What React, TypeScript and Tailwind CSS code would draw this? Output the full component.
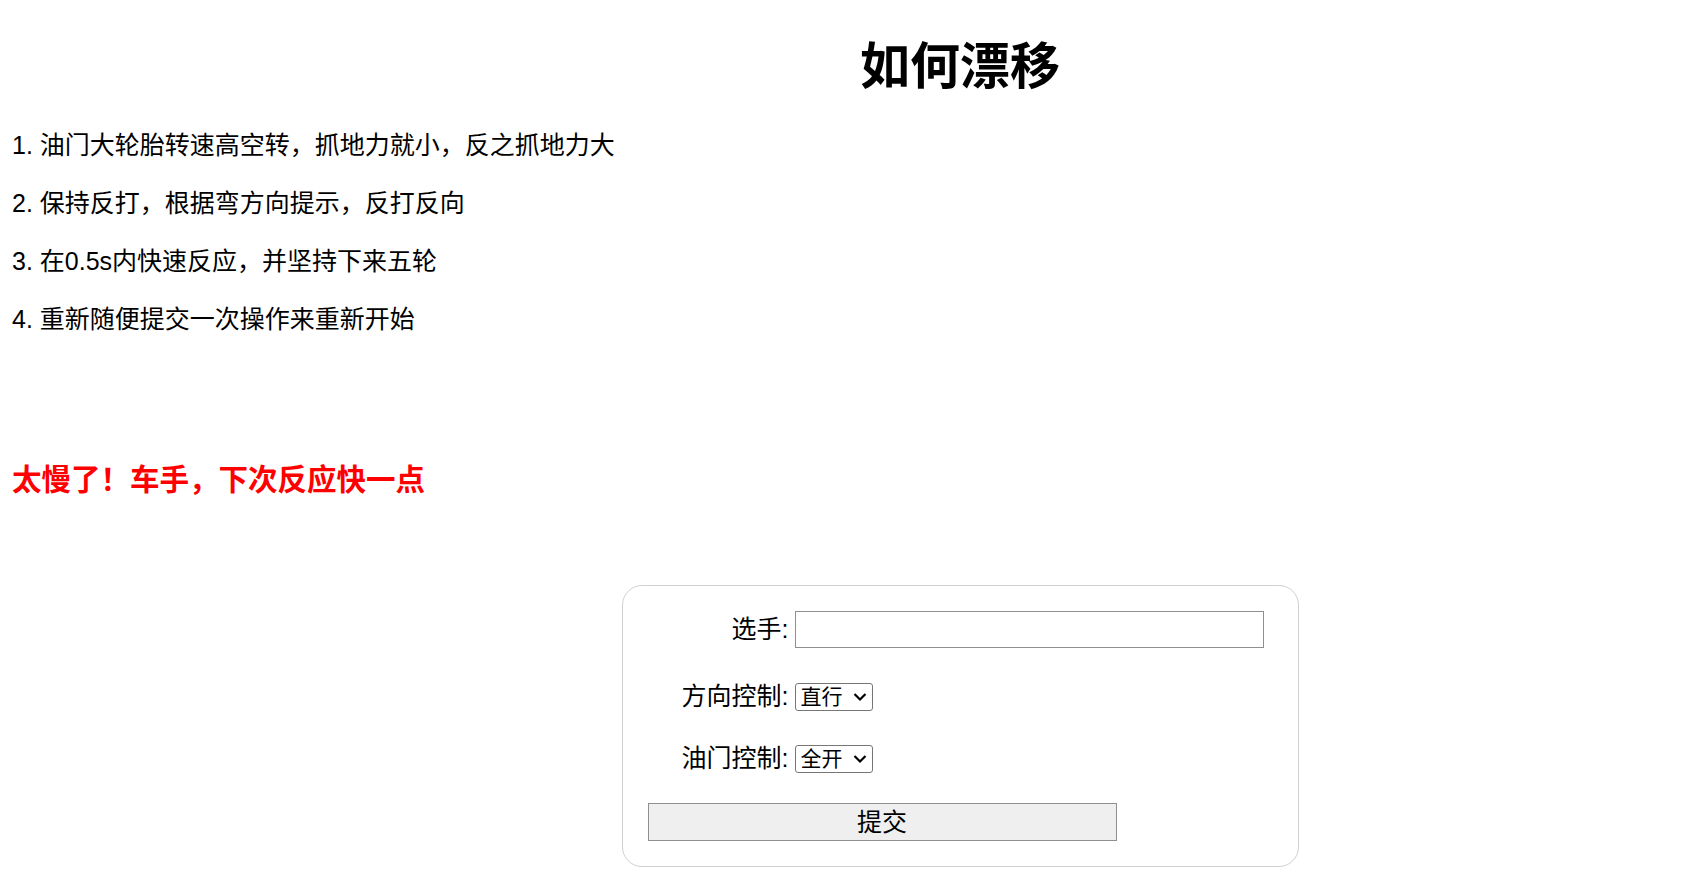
import { useState } from "react";

const font = "font-['Liberation_Sans','Noto_Sans_CJK_SC',sans-serif]";

const tips = [
  "1. 油门大轮胎转速高空转，抓地力就小，反之抓地力大",
  "2. 保持反打，根据弯方向提示，反打反向",
  "3. 在0.5s内快速反应，并坚持下来五轮",
  "4. 重新随便提交一次操作来重新开始",
];

const Chevron = () => (
  <svg width="14" height="9" viewBox="0 0 14 9" className="pointer-events-none absolute right-[6px] top-1/2 -translate-y-1/2">
    <path d="M1.5 1.5 L7 7 L12.5 1.5" fill="none" stroke="#000" strokeWidth="2.2" />
  </svg>
);

const Select = ({ value, options, onChange }: { value: string; options: string[]; onChange: (v: string) => void }) => (
  <div className="relative w-[78px] h-[28px]">
    <select
      className="appearance-none w-full h-full border border-[#767676] rounded-[3px] bg-white pl-[5px] pr-[20px] text-[21px] leading-[26px] text-black outline-none"
      value={value}
      onChange={(e) => onChange(e.target.value)}
    >
      {options.map((o) => (
        <option key={o} value={o}>{o}</option>
      ))}
    </select>
    <Chevron />
  </div>
);

export default function App() {
  const [driver, setDriver] = useState("");
  const [direction, setDirection] = useState("直行");
  const [throttle, setThrottle] = useState("全开");

  return (
    <div className={`w-full overflow-hidden bg-white text-black ${font}`}>
      <div className="w-[1920px]">
        <h1 className="mt-[37px] text-center text-[50px] leading-[60px] font-bold">如何漂移</h1>

        <div className="mt-[31px] pl-[12px]">
          {tips.map((t) => (
            <p key={t} className="text-[25px] leading-[34px] mb-[24px]">{t}</p>
          ))}
        </div>

        <p className="mt-[124px] pl-[12px] text-[29.5px] leading-[40px] font-bold text-[#ff0000]">
          太慢了！车手，下次反应快一点
        </p>

        <form
          className="mx-auto mt-[85px] w-[677px] border border-[#d0d0d0] rounded-[20px] pt-[25px] pb-[25px] pl-[25px]"
          onSubmit={(e) => e.preventDefault()}
        >
          <div className="flex items-center h-[37px]">
            <label className="w-[141px] text-right text-[25px]">选手:</label>
            <input
              className="ml-[6px] w-[469px] h-[37px] border border-[#8f8f8f] px-2 text-[20px] outline-none"
              value={driver}
              onChange={(e) => setDriver(e.target.value)}
            />
          </div>

          <div className="mt-[29px] flex items-center h-[40px]">
            <label className="w-[141px] text-right text-[25px]">方向控制:</label>
            <div className="ml-[6px]">
              <Select value={direction} options={["直行", "左转", "右转"]} onChange={setDirection} />
            </div>
          </div>

          <div className="mt-[22px] flex items-center h-[40px]">
            <label className="w-[141px] text-right text-[25px]">油门控制:</label>
            <div className="ml-[6px]">
              <Select value={throttle} options={["全开", "半开", "关闭"]} onChange={setThrottle} />
            </div>
          </div>

          <button
            type="submit"
            className="mt-[24px] block w-[469px] h-[38px] border border-[#8f8f8f] bg-[#efefef] text-[25px] leading-[36px] text-black"
          >
            提交
          </button>
        </form>
      </div>
    </div>
  );
}
